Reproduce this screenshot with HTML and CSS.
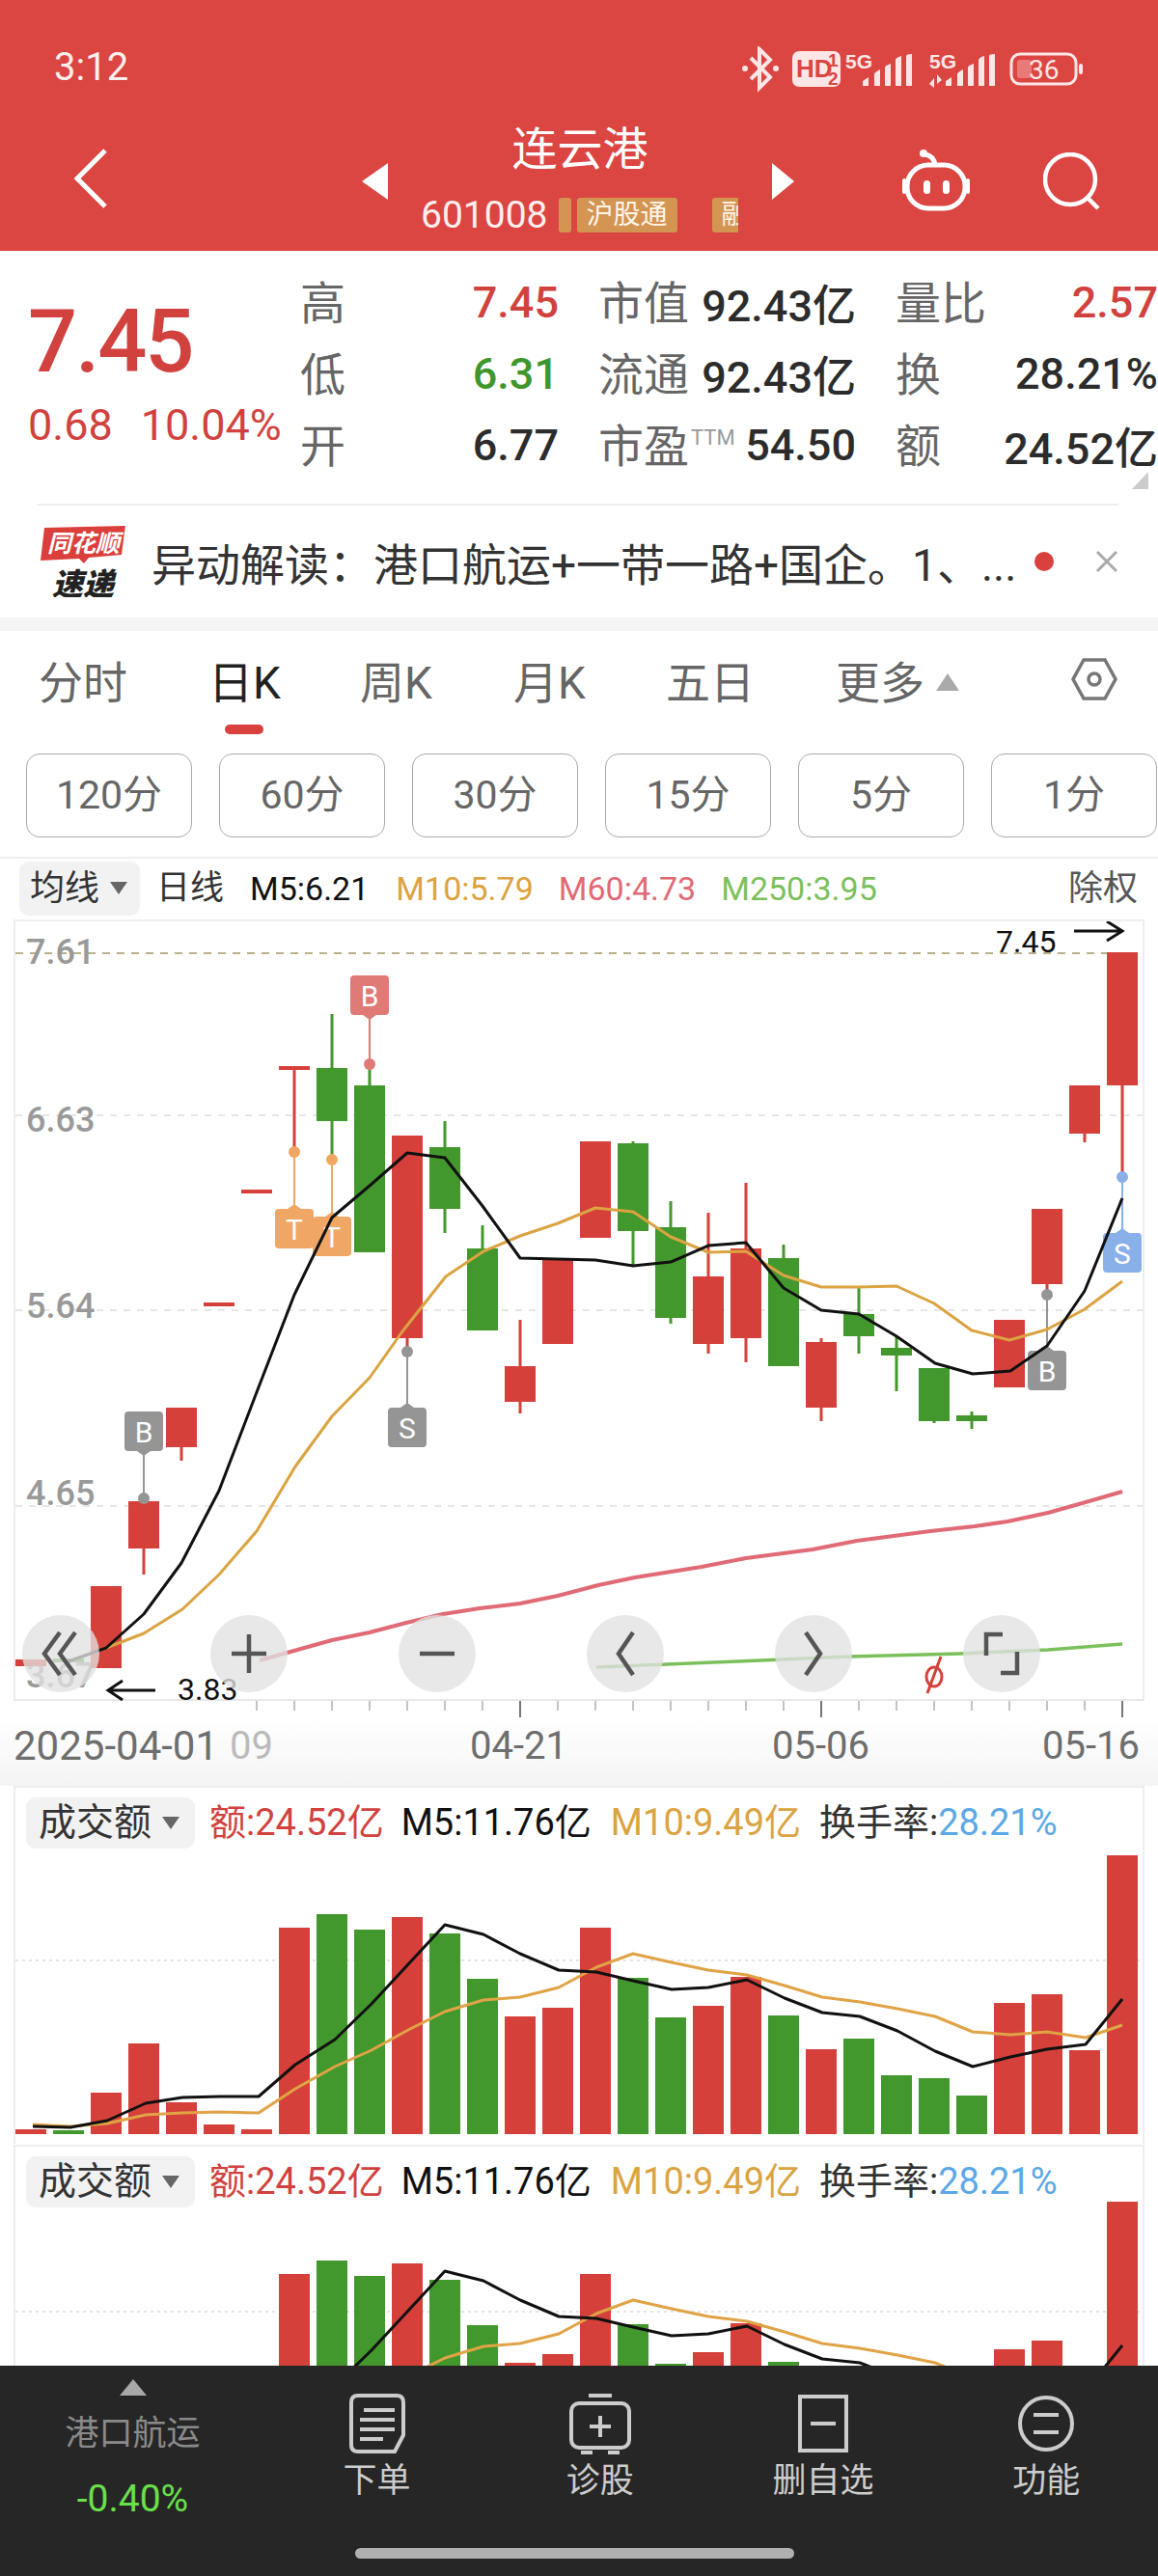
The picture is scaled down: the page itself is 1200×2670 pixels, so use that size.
FILE: index.html
```html
<!DOCTYPE html>
<html>

<head>
    <meta charset="utf-8">
    <link rel="stylesheet" href="styles.css">
</head>

<body>
    <header class="top">
        <div class="status">
            <span class="clock">3:12</span>
            <svg class="status-icons" width="360" height="50" viewBox="765 48 360 50">
                <path class="bt" d="M778 60 L798 80 L787 91 V51 L798 62 L778 82" />
                <circle class="w" cx="772" cy="71" r="3" />
                <circle class="w" cx="804" cy="71" r="3" />
                <rect class="w" x="821" y="53" width="50" height="37" rx="7" />
                <text class="hd" x="825" y="80">HD</text>
                <text class="hd-s" x="858" y="69">1</text>
                <text class="hd-s" x="858" y="88">2</text>
                <text class="fiveg" x="876" y="71">5G</text>
                <path class="w" d="M894 89 V84 L900 80 V89 Z M906 89 V77 Q906 75 912 72 V89 Z M917 89 V70 Q917 68 923 66 V89 Z M928 89 V62 Q928 60 934 58 V89 Z M939 89 V58 Q939 56 945 56 V89 Z" />
                <text class="fiveg" x="963" y="71">5G</text>
                <path class="w" d="M963 87 L968 81 V91 Z M971 77 V87 L976 83 Z" />
                <path class="w" d="M980 89 V84 L986 80 V89 Z M992 89 V77 Q992 75 998 72 V89 Z M1003 89 V70 Q1003 68 1009 66 V89 Z M1014 89 V62 Q1014 60 1020 58 V89 Z M1025 89 V58 Q1025 56 1031 56 V89 Z" />
                <rect class="batt" x="1048" y="56" width="67" height="31" rx="9" />
                <rect class="batt-fill" x="1054" y="62" width="15" height="19" rx="3" />
                <rect class="w" x="1118" y="66" width="4" height="11" rx="2" />
                <text class="batt-num" x="1066" y="82">36</text>
            </svg>
        </div>
        <nav class="nav">
            <svg class="back" width="35" height="62" viewBox="0 0 35 62">
                <path d="M32 2 L3 31 L32 60" />
            </svg>
            <div class="stock-switch">
                <div class="tri tri-left"></div>
                <div class="stock-mid">
                    <div class="stock-name">连云港</div>
                    <div class="stock-code">
                        <span class="code-num">601008</span>
                        <span class="tag tag-cut"></span>
                        <span class="tag">沪股通</span>
                        <span class="tag tag-next">融资融券</span>
                    </div>
                </div>
                <div class="tri tri-right"></div>
            </div>
            <svg class="robot" width="70" height="64" viewBox="0 0 70 64">
                <path class="line" d="M34 16 Q33 7 24 5" />
                <circle class="fill" cx="22" cy="4" r="4" />
                <rect class="line" x="5" y="16" width="60" height="45" rx="22" />
                <rect class="fill" x="0" y="30" width="4" height="16" rx="2" />
                <rect class="fill" x="66" y="30" width="4" height="16" rx="2" />
                <rect class="fill" x="22" y="32" width="7" height="14" rx="3.5" />
                <rect class="fill" x="42" y="32" width="7" height="14" rx="3.5" />
            </svg>
            <svg class="search" width="60" height="60" viewBox="0 0 60 60">
                <circle cx="28" cy="28" r="26" />
                <path d="M47 48 L57 58" />
            </svg>
        </nav>
    </header>

    <section class="quote">
        <div class="price-box">
            <div class="price">7.45</div>
            <div class="change"><span>0.68</span><span>10.04%</span></div>
        </div>
        <div class="stats">
            <div class="stat"><span class="lbl">高</span><span class="red">7.45</span></div>
            <div class="stat"><span class="lbl">市值</span><span>92.43亿</span></div>
            <div class="stat"><span class="lbl">量比</span><span class="red">2.57</span></div>
            <div class="stat"><span class="lbl">低</span><span class="green">6.31</span></div>
            <div class="stat"><span class="lbl">流通</span><span>92.43亿</span></div>
            <div class="stat"><span class="lbl">换</span><span>28.21%</span></div>
            <div class="stat"><span class="lbl">开</span><span>6.77</span></div>
            <div class="stat"><span class="lbl">市盈<sup class="ttm">TTM</sup></span><span>54.50</span></div>
            <div class="stat"><span class="lbl">额</span><span>24.52亿</span></div>
        </div>
        <div class="corner"></div>
    </section>

    <section class="news">
        <div class="news-in">
            <svg class="news-logo" width="90" height="74" viewBox="0 0 90 74">
                <path class="logo-flag" d="M4 2 L88 0 L84 30 L50 33 L45 39 L40 34 L0 36 Z" />
                <text class="logo-top" x="7" y="27">同花顺</text>
                <text class="logo-bot" x="12" y="72">速递</text>
            </svg>
            <div class="news-text">异动解读：港口航运+一带一路+国企。1、...</div>
            <div class="news-dot"></div>
            <svg class="news-x" width="24" height="24" viewBox="0 0 24 24">
                <path d="M2 2 L22 22 M22 2 L2 22" />
            </svg>
        </div>
    </section>

    <div class="band"></div>

    <main class="content">
        <div class="tabs">
            <div class="tab">分时</div>
            <div class="tab tab-on">日K</div>
            <div class="tab">周K</div>
            <div class="tab">月K</div>
            <div class="tab">五日</div>
            <div class="tab">更多<i class="tab-tri"></i></div>
            <svg class="hex" width="48" height="46" viewBox="0 0 48 46">
                <path d="M13 3 H35 L46 23 L35 43 H13 L2 23 Z" />
                <circle cx="24" cy="23" r="6" />
            </svg>
        </div>

        <div class="periods">
            <div class="period">120分</div>
            <div class="period">60分</div>
            <div class="period">30分</div>
            <div class="period">15分</div>
            <div class="period">5分</div>
            <div class="period">1分</div>
        </div>

        <div class="ma-row">
            <div class="pill pill-ma">均线<i class="caret"></i></div>
            <span class="ma-day">日线</span>
            <span class="ma-5">M5:6.21</span>
            <span class="ma-10">M10:5.79</span>
            <span class="ma-60">M60:4.73</span>
            <span class="ma-250">M250:3.95</span>
            <span class="ma-fq">除权</span>
        </div>

        <div class="kline-box">
            <svg id="kline" width="1168" height="808" viewBox="16 955 1168 808"></svg>
            <div class="chart-tools">
                <div class="tool"><svg width="50" height="60" viewBox="0 0 50 60"><path d="M24 8 L8 30 L24 52 M40 8 L24 30 L40 52" /></svg></div>
                <div class="tool"><svg width="50" height="60" viewBox="0 0 50 60"><path d="M25 10 V50 M7 30 H43" /></svg></div>
                <div class="tool"><svg width="50" height="60" viewBox="0 0 50 60"><path d="M7 30 H43" /></svg></div>
                <div class="tool"><svg width="50" height="60" viewBox="0 0 50 60"><path d="M33 8 L18 30 L33 52" /></svg></div>
                <div class="tool"><svg width="50" height="60" viewBox="0 0 50 60"><path d="M17 8 L32 30 L17 52" /></svg></div>
                <div class="tool"><svg width="50" height="60" viewBox="0 0 50 60"><path d="M26 10 H9 V32 M24 50 H41 V28" /></svg></div>
            </div>
        </div>

        <div class="axis">
            <svg id="ticks" width="1172" height="18" viewBox="14 1763 1172 18"></svg>
            <div class="dates">
                <span class="date-first">2025-04-01</span>
                <span class="date-09">09</span>
                <span class="date-a">04-21</span>
                <span class="date-b">05-06</span>
                <span class="date-c">05-16</span>
            </div>
        </div>

        <div class="vol-box">
            <div class="vol-head">
                <div class="pill pill-vol">成交额<i class="caret"></i></div>
                <span class="v-amt">额:24.52亿</span>
                <span class="v-5">M5:11.76亿</span>
                <span class="v-10">M10:9.49亿</span>
                <span class="v-rate">换手率:<b>28.21%</b></span>
            </div>
            <svg id="vol1" class="vol-svg" width="1168" height="306" viewBox="16 1916 1168 306"></svg>
        </div>

        <div class="vol-box vol-second">
            <div class="vol-head">
                <div class="pill pill-vol">成交额<i class="caret"></i></div>
                <span class="v-amt">额:24.52亿</span>
                <span class="v-5">M5:11.76亿</span>
                <span class="v-10">M10:9.49亿</span>
                <span class="v-rate">换手率:<b>28.21%</b></span>
            </div>
            <svg id="vol2" class="vol-svg" width="1168" height="306" viewBox="16 1916 1168 306"></svg>
        </div>
    </main>

    <footer class="foot">
        <div class="foot-row">
            <div class="sector">
                <i class="sector-tri"></i>
                <div class="sector-name">港口航运</div>
                <div class="sector-chg">-0.40%</div>
            </div>
            <div class="foot-item">
                <svg width="60" height="64" viewBox="0 0 60 64">
                    <path d="M10 3 H50 Q57 3 57 10 V44 L48 61 H10 Q3 61 3 54 V10 Q3 3 10 3 Z" />
                    <path d="M16 18 H48 M12 28 H48 M12 38 H48 M12 48 H36" />
                </svg>
                <span>下单</span>
            </div>
            <div class="foot-item">
                <svg width="64" height="64" viewBox="0 0 64 64">
                    <path d="M20 3 H44" />
                    <rect x="2" y="11" width="60" height="46" rx="8" />
                    <path d="M32 24 V46 M21 35 H43 M12 62 H24 M40 62 H52" />
                </svg>
                <span>诊股</span>
            </div>
            <div class="foot-item">
                <svg width="64" height="64" viewBox="0 0 64 64">
                    <rect x="8" y="4" width="48" height="56" />
                    <path d="M19 32 H45" />
                </svg>
                <span>删自选</span>
            </div>
            <div class="foot-item">
                <svg width="64" height="64" viewBox="0 0 64 64">
                    <circle cx="32" cy="32" r="27" />
                    <path d="M19 23 H45 M19 41 H45" />
                </svg>
                <span>功能</span>
            </div>
        </div>
        <div class="home-bar"></div>
    </footer>

    <script src="chart.js"></script>
</body>

</html>
```

FILE: styles.css
```css
* {
    box-sizing: border-box;
}

body {
    margin: 0;
    width: 1200px;
    height: 2670px;
    overflow: hidden;
    display: flex;
    flex-direction: column;
    background: #fff;
    color: #333;
    font-family: Roboto, "Noto Sans CJK SC", sans-serif;
}

/* header */
.top {
    height: 260px;
    background: #db4542;
    color: #fff;
}

.status {
    height: 100px;
    position: relative;
}

.clock {
    position: absolute;
    left: 56px;
    top: 47px;
    font-size: 40px;
    line-height: 46px;
    color: #fdeeee;
}

.status-icons {
    position: absolute;
    left: 765px;
    top: 48px;
}

.status-icons .w {
    fill: #fde6e6;
}

.status-icons .bt {
    fill: none;
    stroke: #fde6e6;
    stroke-width: 4;
}

.hd {
    font: bold 26px "Liberation Sans", sans-serif;
    fill: #db4542;
}

.hd-s {
    font: bold 19px "Liberation Sans", sans-serif;
    fill: #db4542;
}

.fiveg {
    font: bold 21px "Liberation Sans", sans-serif;
    fill: #fde6e6;
}

.batt {
    fill: none;
    stroke: #fde6e6;
    stroke-width: 3;
}

.batt-fill {
    fill: #e87a78;
}

.batt-num {
    font: 28px Roboto, sans-serif;
    fill: #fde6e6;
}

.nav {
    height: 160px;
    display: flex;
    align-items: flex-start;
    padding-left: 77px;
}

.back {
    margin-top: 54px;
}

.back path {
    fill: none;
    stroke: #fff;
    stroke-width: 5;
}

.stock-switch {
    width: 448px;
    margin-left: 263px;
    display: flex;
    align-items: flex-start;
}

.tri {
    width: 0;
    height: 0;
    margin-top: 69px;
    border-top: 19px solid transparent;
    border-bottom: 19px solid transparent;
}

.tri-left {
    border-right: 27px solid #fff;
}

.tri-right {
    border-left: 23px solid #fff;
}

.stock-mid {
    width: 398px;
    display: flex;
    flex-direction: column;
    align-items: center;
}

.stock-name {
    font-size: 47px;
    line-height: 56px;
    margin-top: 27px;
}

.stock-code {
    width: 329px;
    margin: 22px 0 0 34px;
    align-self: flex-start;
    height: 36px;
    overflow: hidden;
    display: flex;
    white-space: nowrap;
}

.code-num {
    flex: none;
    font-size: 39px;
    line-height: 36px;
    color: #fdeeee;
    margin-right: 11px;
}

.tag {
    flex: none;
    height: 36px;
    padding: 0 10px;
    margin-right: 36px;
    background: #d49452;
    border-radius: 3px;
    font-size: 28px;
    line-height: 36px;
    color: #fff6ea;
}

.tag-cut {
    width: 13px;
    padding: 0;
    margin-right: 6px;
}

.robot {
    margin: 55px 0 0 112px;
}

.robot .line {
    fill: none;
    stroke: #fff;
    stroke-width: 5;
}

.robot .fill {
    fill: #fff;
}

.search {
    margin: 58px 0 0 76px;
}

.search circle,
.search path {
    fill: none;
    stroke: #fff;
    stroke-width: 4.5;
}

/* quote */
.quote {
    height: 262px;
    display: flex;
    position: relative;
    padding: 16px 0 0 29px;
}

.price-box {
    width: 285px;
    color: #d1423e;
}

.price {
    font-size: 90px;
    font-weight: 500;
    letter-spacing: -2px;
    line-height: 100px;
    margin-top: 29px;
}

.change {
    display: flex;
    gap: 29px;
    font-size: 45px;
    line-height: 50px;
    margin-top: 11px;
}

.stats {
    display: grid;
    grid-template-columns: 265px 264px 269px;
    grid-auto-rows: 74px;
    column-gap: 44px;
    align-content: start;
    flex: none;
}

.stat {
    display: flex;
    justify-content: space-between;
    align-items: center;
    font-size: 45px;
    font-weight: 500;
    color: #2c2c2c;
    white-space: nowrap;
}

.lbl {
    font-size: 47px;
    font-weight: 400;
    color: #666;
    margin: 0 0 6px -3px;
}

.ttm {
    font-size: 22px;
    color: #999;
    vertical-align: 18px;
    line-height: 0;
    margin-left: 2px;
}

.red {
    color: #d1423e;
}

.green {
    color: #3f962c;
}

.corner {
    position: absolute;
    right: 10px;
    top: 229px;
    width: 0;
    height: 0;
    border-left: 17px solid transparent;
    border-bottom: 18px solid #ccc;
}

/* news strip */
.news {
    height: 118px;
    padding: 0 41px 0 38px;
}

.news-in {
    height: 100%;
    display: flex;
    align-items: center;
    border-top: 2px solid #eee;
}

.news-logo {
    margin-left: 4px;
}

.logo-flag {
    fill: #db3f3c;
}

.logo-top {
    font: italic bold 25px "Noto Sans CJK SC", sans-serif;
    fill: #fff;
}

.logo-bot {
    font: italic 900 32px "Noto Sans CJK SC", sans-serif;
    fill: #222;
}

.news-text {
    width: 898px;
    margin-left: 25px;
    font-size: 46px;
    color: #333;
    white-space: nowrap;
}

.news-dot {
    width: 20px;
    height: 20px;
    margin-left: 18px;
    border-radius: 50%;
    background: #d9413e;
}

.news-x {
    margin-left: 43px;
}

.news-x path {
    fill: none;
    stroke: #aaa;
    stroke-width: 3;
}

.band {
    height: 14px;
    background: #f5f5f5;
}

/* main */
.content {
    flex: 1;
    overflow: hidden;
}

.tabs {
    height: 127px;
    display: grid;
    grid-template-columns: 176px 157px 159px 158px 176px 244px auto;
    padding: 28px 0 0 40px;
    align-items: start;
}

.tab {
    font-size: 46px;
    line-height: 52px;
    color: #666;
    position: relative;
    display: flex;
}

.tab-on {
    color: #222;
}

.tab-on::after {
    content: "";
    position: absolute;
    left: 17px;
    top: 69px;
    width: 40px;
    height: 10px;
    border-radius: 5px;
    background: #d9413e;
}

.tab-tri {
    width: 0;
    height: 0;
    margin: 16px 0 0 12px;
    border-left: 12px solid transparent;
    border-right: 12px solid transparent;
    border-bottom: 18px solid #aaa;
}

.hex {
    margin-top: -1px;
}

.hex path,
.hex circle {
    fill: none;
    stroke: #777;
    stroke-width: 3.5;
}

.periods {
    display: flex;
    gap: 28px;
    padding: 0 0 20px 27px;
    border-bottom: 2px solid #eee;
}

.period {
    width: 172px;
    height: 87px;
    flex: none;
    border: 1.5px solid #aaa;
    border-radius: 14px;
    font-size: 41px;
    line-height: 84px;
    color: #666;
    text-align: center;
}

.ma-row {
    height: 63px;
    padding: 3px 0 0 20px;
    display: flex;
    align-items: flex-start;
    font-size: 34px;
    line-height: 56px;
    white-space: nowrap;
}

.pill {
    background: #f2f2f2;
    border-radius: 10px;
    display: flex;
    color: #333;
}

.pill-ma {
    width: 125px;
    height: 56px;
    padding-left: 11px;
    font-size: 36px;
}

.caret {
    width: 0;
    height: 0;
    border-left: 9px solid transparent;
    border-right: 9px solid transparent;
    border-top: 13px solid #666;
}

.pill-ma .caret {
    margin: 21px 0 0 11px;
}

.ma-day {
    margin-left: 17px;
    font-size: 35px;
    color: #333;
}

.ma-5 {
    margin-left: 27px;
    color: #111;
}

.ma-10 {
    margin-left: 28px;
    color: #dba341;
}

.ma-60 {
    margin-left: 26px;
    color: #e06a75;
}

.ma-250 {
    margin-left: 26px;
    color: #7cc05c;
}

.ma-fq {
    margin-left: auto;
    margin-right: 21px;
    font-size: 36px;
    color: #555;
}

.kline-box {
    margin: 0 14px;
    height: 810px;
    border: 2px solid #eee;
    border-bottom: 2px solid #e8e8e8;
    position: relative;
}

#kline,
.vol-svg {
    display: block;
}

.chart-tools {
    position: absolute;
    left: 7px;
    top: 719px;
    display: flex;
    gap: 115px;
}

.tool {
    width: 80px;
    height: 80px;
    border-radius: 50%;
    background: rgba(226, 226, 226, 0.78);
    display: flex;
    align-items: center;
    justify-content: center;
}

.tool path {
    fill: none;
    stroke: #555;
    stroke-width: 4.5;
}

.axis {
    height: 88px;
    padding: 0 14px;
    background: linear-gradient(#fff 20%, #f4f4f4);
}

#ticks {
    display: block;
}

.dates {
    display: flex;
    font-size: 40px;
    line-height: 46px;
    color: #6e6e6e;
    white-space: nowrap;
    margin-top: 6px;
}

.date-first {
    font-size: 42px;
}

.date-09 {
    margin-left: 12px;
    color: #bbb;
}

.date-a {
    margin-left: 204px;
}

.date-b {
    margin-left: 212px;
}

.date-c {
    margin-left: 179px;
}

.vol-box {
    margin: 0 14px;
    height: 371px;
    padding-top: 10px;
    border: 2px solid #eee;
    border-bottom: 0;
    background: #fff;
}

.vol-second {
    margin-top: 1px;
}

.vol-head {
    height: 55px;
    display: flex;
    align-items: flex-start;
    padding-left: 11px;
    font-size: 38px;
    line-height: 53px;
    white-space: nowrap;
}

.vol-second .vol-head {
    margin-bottom: -13px;
}

.pill-vol {
    width: 175px;
    height: 53px;
    padding-left: 13px;
    font-size: 39px;
    flex: none;
}

.pill-vol .caret {
    margin: 20px 0 0 11px;
}

.v-amt {
    margin-left: 15px;
    color: #d1423e;
}

.v-5 {
    margin-left: 18px;
    color: #111;
}

.v-10 {
    margin-left: 20px;
    color: #dba341;
}

.v-rate {
    margin-left: 19px;
    color: #333;
}

.v-rate b {
    font-weight: 400;
    color: #5ba8e6;
}

/* chart svg */
.axis-price {
    font: 500 36px Roboto, sans-serif;
    fill: #999;
}

.mark-price {
    font: 32px Roboto, sans-serif;
    fill: #111;
}

.mark-label {
    font: 30px Roboto, sans-serif;
    fill: #fff;
    text-anchor: middle;
}

/* footer */
.foot {
    height: 218px;
    background: #262626;
    flex: none;
}

.foot-row {
    height: 189px;
    display: flex;
}

.sector {
    width: 275px;
    display: flex;
    flex-direction: column;
    align-items: center;
    padding-top: 14px;
}

.sector-tri {
    width: 0;
    height: 0;
    border-left: 14px solid transparent;
    border-right: 14px solid transparent;
    border-bottom: 17px solid #a8a8a8;
}

.sector-name {
    font-size: 35px;
    line-height: 44px;
    margin-top: 18px;
    color: #8a8a8a;
}

.sector-chg {
    font-size: 39px;
    line-height: 44px;
    margin-top: 23px;
    color: #6ae04a;
}

.foot-item {
    flex: 1;
    display: flex;
    flex-direction: column;
    align-items: center;
    padding-top: 28px;
    font-size: 35px;
    line-height: 44px;
    color: #ccc;
}

.foot-item svg {
    margin-bottom: 6px;
}

.foot-item path,
.foot-item rect,
.foot-item circle {
    fill: none;
    stroke: #ccc;
    stroke-width: 4;
}

.home-bar {
    width: 455px;
    height: 11px;
    margin-left: 368px;
    border-radius: 6px;
    background: #b0b0b0;
}
```

FILE: chart.js
```js
const RED = '#d5403a';
const GREEN = '#43982d';
const cx = i => 32 + 39 * i;

// [index, colour, body top, body bottom, high, low], page pixels
const candles = [
    [0, 'r', 1720, 1727], [1, 'g', 1719, 1723], [2, 'r', 1644, 1729],
    [3, 'r', 1556, 1605, 1550, 1632], [4, 'r', 1459, 1500, 1459, 1514],
    [5, 'r', 1350, 1354], [6, 'r', 1233, 1237],
    [7, 'r', 1105, 1109, 1105, 1192], [8, 'g', 1107, 1162, 1051, 1202],
    [9, 'g', 1125, 1298, 1103, 1298], [10, 'r', 1177, 1387, 1177, 1401],
    [11, 'g', 1189, 1253, 1162, 1278], [12, 'g', 1294, 1379, 1270, 1379],
    [13, 'r', 1416, 1453, 1368, 1465], [14, 'r', 1306, 1393],
    [15, 'r', 1183, 1283], [16, 'g', 1185, 1276, 1183, 1312],
    [17, 'g', 1272, 1366, 1245, 1372], [18, 'r', 1323, 1393, 1257, 1403],
    [19, 'r', 1294, 1387, 1226, 1412], [20, 'g', 1304, 1416, 1290, 1416],
    [21, 'r', 1391, 1459, 1387, 1473], [22, 'g', 1362, 1385, 1333, 1403],
    [23, 'g', 1397, 1405, 1385, 1442], [24, 'g', 1418, 1473, 1418, 1475],
    [25, 'g', 1467, 1473, 1463, 1481], [26, 'r', 1368, 1438],
    [27, 'r', 1253, 1331, 1253, 1342], [28, 'r', 1125, 1175, 1125, 1184],
    [29, 'r', 987, 1125, 987, 1217]
];

// [index, label, dot y, box top, box colour]
const markers = [
    [3, 'B', 1553, 1463, '#959595'], [7, 'T', 1194, 1253, '#f0a765'],
    [8, 'T', 1202, 1261, '#f0a765'], [9, 'B', 1103, 1011, '#e07a76'],
    [10, 'S', 1401, 1459, '#959595'], [27, 'B', 1342, 1400, '#959595'],
    [29, 'S', 1220, 1278, '#8ab0ea']
];

const m5 = [[71, 1722], [110, 1708], [149, 1673], [188, 1620], [227, 1545], [266, 1443], [305, 1342], [344, 1262], [383, 1229], [422, 1195], [461, 1200], [500, 1250], [539, 1304], [578, 1305], [617, 1306], [656, 1312], [695, 1308], [734, 1291], [773, 1288], [812, 1335], [851, 1358], [890, 1362], [929, 1385], [969, 1413], [1008, 1424], [1047, 1421], [1085, 1395], [1124, 1338], [1163, 1242]];
const m10 = [[71, 1722], [110, 1708], [149, 1693], [189, 1668], [227, 1632], [266, 1587], [306, 1520], [344, 1468], [383, 1428], [417, 1380], [462, 1323], [501, 1297], [539, 1281], [578, 1268], [617, 1252], [656, 1256], [695, 1282], [734, 1298], [773, 1297], [812, 1322], [851, 1334], [890, 1334], [929, 1333], [968, 1351], [1007, 1379], [1046, 1389], [1085, 1378], [1124, 1357], [1163, 1328]];
const m60 = [[269, 1721], [344, 1700], [383, 1692], [421, 1682], [459, 1673], [497, 1667], [539, 1662], [578, 1654], [620, 1643], [658, 1635], [727, 1624], [773, 1615], [842, 1606], [888, 1597], [964, 1587], [1010, 1582], [1044, 1577], [1086, 1568], [1125, 1557], [1163, 1546]];
const m250 = [[618, 1728], [765, 1722], [880, 1717], [995, 1714], [1086, 1710], [1163, 1704]];

function poly(points, color, width) {
    const d = points.map(p => p[0] + ',' + p[1]).join(' ');
    return `<polyline points="${d}" fill="none" stroke="${color}" stroke-width="${width}" stroke-linejoin="round"/>`;
}

function drawKline() {
    let s = '';
    [1156, 1358, 1561].forEach(y => {
        s += `<line x1="16" x2="1184" y1="${y}" y2="${y}" stroke="#e6e6e6" stroke-width="2" stroke-dasharray="7 7"/>`;
    });
    s += '<line x1="16" x2="1184" y1="988" y2="988" stroke="#b9b08a" stroke-width="2" stroke-dasharray="8 7"/>';
    [['7.61', 999], ['6.63', 1173], ['5.64', 1366], ['4.65', 1560], ['3.67', 1749]].forEach(l => {
        s += `<text class="axis-price" x="27" y="${l[1]}">${l[0]}</text>`;
    });

    candles.forEach(c => {
        const color = c[1] === 'r' ? RED : GREEN;
        const x = cx(c[0]);
        if (c[4] !== undefined) {
            s += `<rect x="${x - 1.5}" y="${c[4]}" width="3" height="${c[5] - c[4]}" fill="${color}"/>`;
        }
        s += `<rect x="${x - 16}" y="${c[2]}" width="32" height="${c[3] - c[2]}" fill="${color}"/>`;
    });

    markers.forEach(m => {
        const x = cx(m[0]);
        const up = m[3] < m[2];
        const edge = up ? m[3] + 41 : m[3];
        const tip = up ? edge + 5 : edge - 5;
        s += `<line x1="${x}" x2="${x}" y1="${m[2]}" y2="${edge}" stroke="${m[4]}" stroke-width="2"/>`;
        s += `<circle cx="${x}" cy="${m[2]}" r="6" fill="${m[4]}"/>`;
        s += `<path d="M${x - 7} ${edge} L${x} ${tip} L${x + 7} ${edge} Z" fill="${m[4]}"/>`;
        s += `<rect x="${x - 20}" y="${m[3]}" width="40" height="41" rx="4" fill="${m[4]}"/>`;
        s += `<text class="mark-label" x="${x}" y="${m[3] + 32}">${m[1]}</text>`;
    });

    s += poly(m250, '#7cc05c', 3.5) + poly(m60, '#e06a75', 4) + poly(m10, '#dba341', 3) + poly(m5, '#111', 3);

    s += '<text class="mark-price" x="1032" y="987">7.45</text>';
    s += '<path d="M1113 965 H1162 M1147 955 L1163 965 L1147 975" fill="none" stroke="#111" stroke-width="3"/>';
    s += '<text class="mark-price" x="184" y="1762">3.83</text>';
    s += '<path d="M161 1752 H113 M127 1742 L112 1752 L127 1762" fill="none" stroke="#111" stroke-width="3"/>';
    // low-price mark near the bottom
    s += `<ellipse cx="968" cy="1738" rx="8" ry="10" fill="none" stroke="${RED}" stroke-width="3"/>`;
    s += `<line x1="975" y1="1717" x2="961" y2="1755" stroke="${RED}" stroke-width="3"/>`;

    document.getElementById('kline').innerHTML = s;
}

function drawTicks() {
    let s = '';
    for (let i = 6; i < 30; i++) {
        const big = i === 13 || i === 21 || i === 29;
        s += `<line x1="${cx(i)}" x2="${cx(i)}" y1="1763" y2="${big ? 1780 : 1773}" stroke="${big ? '#777' : '#c4c4c4'}" stroke-width="2"/>`;
    }
    document.getElementById('ticks').innerHTML = s;
}

// bar tops, page pixels for the first panel
const vol = [
    [2205, 'r'], [2206, 'g'], [2167, 'r'], [2116, 'r'], [2177, 'r'], [2200, 'r'], [2205, 'r'],
    [1996, 'r'], [1982, 'g'], [1998, 'g'], [1985, 'r'], [2002, 'g'], [2049, 'g'], [2088, 'r'],
    [2079, 'r'], [1996, 'r'], [2048, 'g'], [2089, 'g'], [2077, 'r'], [2047, 'r'], [2087, 'g'],
    [2122, 'r'], [2111, 'g'], [2149, 'g'], [2152, 'g'], [2170, 'g'], [2074, 'r'], [2065, 'r'],
    [2123, 'r'], [1921, 'r']
];
const volM5 = [[34, 2202], [73, 2203], [111, 2196], [151, 2178], [189, 2172], [228, 2171], [268, 2171], [306, 2138], [347, 2112], [385, 2075], [461, 1993], [501, 2003], [539, 2023], [579, 2040], [618, 2042], [656, 2051], [696, 2060], [734, 2058], [774, 2050], [813, 2069], [852, 2084], [891, 2088], [930, 2103], [969, 2124], [1008, 2140], [1047, 2130], [1085, 2122], [1125, 2117], [1163, 2070]];
const volM10 = [[34, 2200], [73, 2202], [111, 2199], [151, 2190], [189, 2188], [228, 2187], [268, 2188], [306, 2163], [347, 2140], [385, 2123], [423, 2102], [461, 2083], [501, 2071], [539, 2068], [579, 2058], [618, 2037], [656, 2023], [696, 2032], [734, 2040], [774, 2045], [813, 2056], [852, 2068], [891, 2073], [930, 2080], [969, 2088], [1008, 2104], [1047, 2107], [1085, 2104], [1125, 2110], [1163, 2097]];

function drawVolume(id, gridY) {
    let s = `<line x1="16" x2="1184" y1="${gridY}" y2="${gridY}" stroke="#e4e4e4" stroke-width="2" stroke-dasharray="3 4"/>`;
    vol.forEach((v, i) => {
        const color = v[1] === 'r' ? RED : GREEN;
        s += `<rect x="${cx(i) - 16}" y="${v[0]}" width="32" height="${2210 - v[0]}" fill="${color}"/>`;
    });
    s += poly(volM10, '#e0a345', 3) + poly(volM5, '#111', 3);
    document.getElementById(id).innerHTML = s;
}

drawKline();
drawTicks();
drawVolume('vol1', 2030);
drawVolume('vol2', 2035);
```
